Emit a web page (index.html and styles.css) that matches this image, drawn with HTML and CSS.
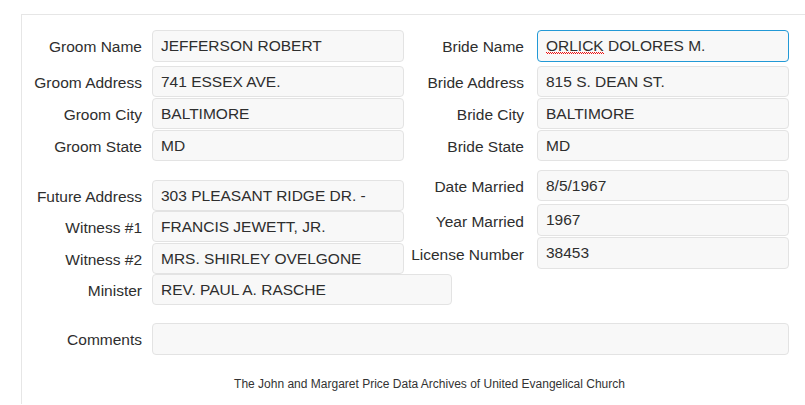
FILE: index.html
```html
<!DOCTYPE html>
<html>
<head>
<meta charset="utf-8">
<link rel="stylesheet" href="styles.css">
</head>
<body>
<div class="panel">
  <div class="pairs">
    <div class="pair-row first">
      <div class="label">Groom Name</div><div class="field">JEFFERSON ROBERT</div>
      <div class="label label-r">Bride Name</div><div class="field focus"><span class="spell">ORLICK</span> DOLORES M.</div>
    </div>
    <div class="pair-row">
      <div class="label">Groom Address</div><div class="field">741 ESSEX AVE.</div>
      <div class="label label-r">Bride Address</div><div class="field">815 S. DEAN ST.</div>
    </div>
    <div class="pair-row">
      <div class="label">Groom City</div><div class="field">BALTIMORE</div>
      <div class="label label-r">Bride City</div><div class="field">BALTIMORE</div>
    </div>
    <div class="pair-row">
      <div class="label">Groom State</div><div class="field">MD</div>
      <div class="label label-r">Bride State</div><div class="field">MD</div>
    </div>
  </div>

  <div class="section2">
    <div class="col-left">
      <div class="row">
        <div class="label">Future Address</div><div class="field">303 PLEASANT RIDGE DR. -</div>
      </div>
      <div class="row">
        <div class="label">Witness #1</div><div class="field">FRANCIS JEWETT, JR.</div>
      </div>
      <div class="row">
        <div class="label">Witness #2</div><div class="field">MRS. SHIRLEY OVELGONE</div>
      </div>
      <div class="row">
        <div class="label">Minister</div><div class="field wide">REV. PAUL A. RASCHE</div>
      </div>
    </div>
    <div class="col-right">
      <div class="row r1">
        <div class="label label-r">Date Married</div><div class="field">8/5/1967</div>
      </div>
      <div class="row r2">
        <div class="label label-r">Year Married</div><div class="field">1967</div>
      </div>
      <div class="row">
        <div class="label label-r">License Number</div><div class="field">38453</div>
      </div>
    </div>
  </div>

  <div class="row comments">
    <div class="label">Comments</div><div class="field full"></div>
  </div>

  <div class="footer">The John and Margaret Price Data Archives of United Evangelical Church</div>
</div>
</body>
</html>
```

FILE: styles.css
```css
html, body {
  margin: 0;
  padding: 0;
  background: #ffffff;
  overflow: hidden;
}

body {
  font-family: "Liberation Sans", Arial, sans-serif;
  color: #333333;
  font-size: 15.5px;
}

.panel {
  margin: 14px 0 0 21px;
  border-top: 1px solid #e6e6e6;
  border-left: 1px solid #e6e6e6;
  height: calc(100vh - 15px);
  box-sizing: border-box;
  padding-top: 15px;
}

.pair-row {
  display: grid;
  grid-template-columns: 130px 252px 133px 252px;
  align-items: center;
  margin-bottom: 0.5px;
}

.pair-row.first {
  margin-bottom: 4.2px;
}

.label {
  text-align: right;
  padding-right: 10px;
  padding-top: 3px;
  white-space: nowrap;
  color: #2e2e2e;
  line-height: 18px;
}

.label-r {
  padding-right: 13px;
}

.field {
  box-sizing: border-box;
  height: 31.5px;
  line-height: 30.5px;
  padding: 0 8px;
  background: #f8f8f8;
  border: 1px solid #e3e3e3;
  border-radius: 4px;
  color: #2e2e2e;
  white-space: nowrap;
  overflow: hidden;
}

.field.focus {
  border-color: #2299d6;
}

.spell {
  background-image:
    linear-gradient(to right, #ee1111 50%, transparent 50%),
    linear-gradient(to right, transparent 50%, #ee1111 50%);
  background-size: 2px 1px, 2px 1px;
  background-repeat: repeat-x, repeat-x;
  background-position: 0 calc(100% - 1px), 0 100%;
  padding-bottom: 0;
}

.section2 {
  display: flex;
  align-items: flex-start;
  margin-top: 8.8px;
}

.col-left {
  width: 382px;
  padding-top: 10px;
}

.col-left .row {
  display: grid;
  grid-template-columns: 130px 252px;
  align-items: center;
  margin-bottom: 0.4px;
}

.col-left .field {
  height: 31px;
  line-height: 30px;
}

.col-left .field.wide {
  width: 300px;
}

.col-right .row {
  display: grid;
  grid-template-columns: 133px 252px;
  align-items: center;
}

.col-right .row.r1 {
  margin-bottom: 2.8px;
}

.col-right .row.r2 {
  margin-bottom: 1.5px;
}

.comments {
  display: grid;
  grid-template-columns: 130px 637px;
  align-items: center;
  margin-top: 17.5px;
}

.footer {
  margin-top: 21.5px;
  padding-left: 32px;
  text-align: center;
  font-size: 12px;
  line-height: 16px;
  color: #333333;
}
```
